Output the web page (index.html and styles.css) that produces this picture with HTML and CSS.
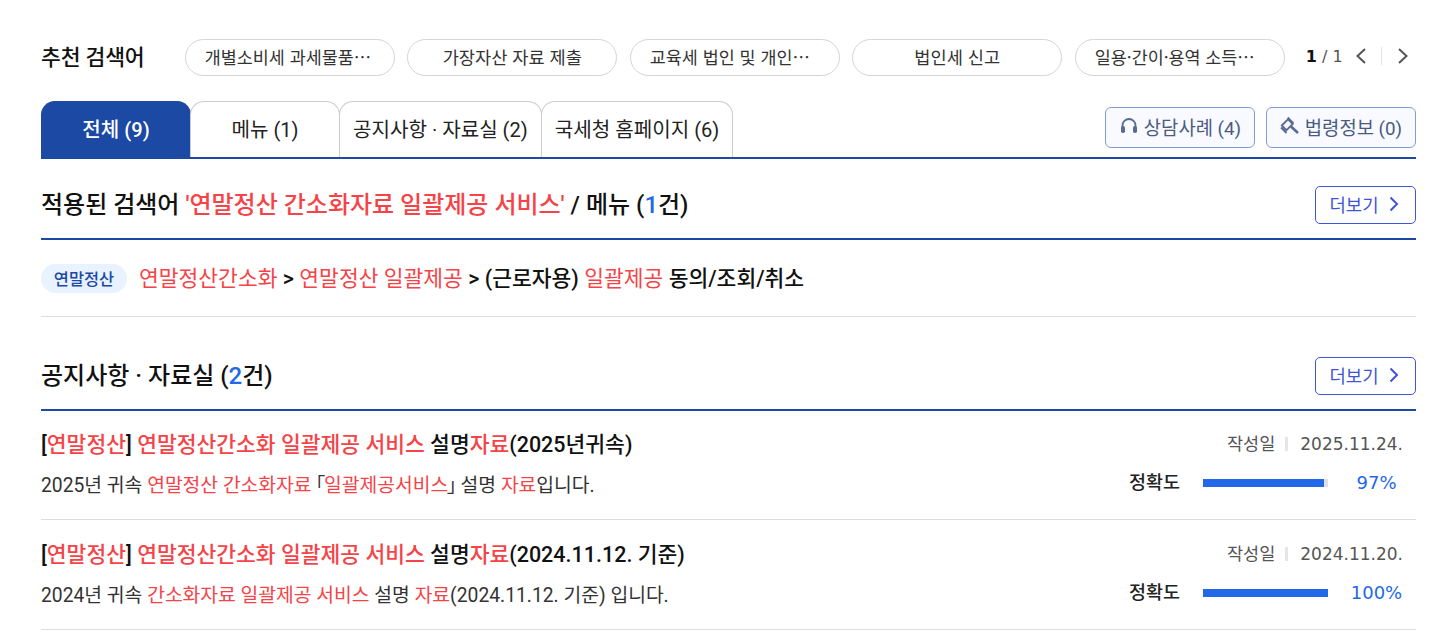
FILE: index.html
```html
<!DOCTYPE html>
<html lang="ko">
<head>
    <meta charset="UTF-8">
    <meta name="viewport" content="width=device-width, initial-scale=1.0">
    <title>검색 결과</title>
    <link rel="stylesheet" href="styles.css">
</head>
<body>
    <div class="wrap">
        <div class="rec-row">
            <strong class="rec-title">추천 검색어</strong>
            <div class="rec-list">
                <a class="pill pill-cut">개별소비세 과세물품…</a>
                <a class="pill">가장자산 자료 제출</a>
                <a class="pill pill-cut">교육세 법인 및 개인…</a>
                <a class="pill">법인세 신고</a>
                <a class="pill pill-cut">일용·간이·용역 소득…</a>
            </div>
            <div class="pager">
                <span class="pager-num"><b>1</b> / 1</span>
                <svg class="pager-arrow" viewBox="0 0 12 18"><path d="M11 2 3.500 9l7.500 7"/></svg>
                <i class="pager-sep"></i>
                <svg class="pager-arrow" viewBox="0 0 12 18"><path d="M1 2l7.500 7L1 16"/></svg>
            </div>
        </div>

        <div class="tab-row">
            <div class="tabs">
                <a class="tab tab-on tab-w1">전체 (9)</a>
                <a class="tab tab-w1">메뉴 (1)</a>
                <a class="tab">공지사항 · 자료실 (2)</a>
                <a class="tab">국세청 홈페이지 (6)</a>
            </div>
            <div class="side-btns">
                <a class="side-btn">
                    <svg class="side-icon" viewBox="0 0 20 20"><path class="ic-line" d="M3.500 12V9.500a6.500 6.500 0 0 1 13 0V12"/><rect class="ic-fill" x="2" y="10" width="4" height="7" rx="1.800"/><rect class="ic-fill" x="14" y="10" width="4" height="7" rx="1.800"/></svg>
                    상담사례 (4)
                </a>
                <a class="side-btn">
                    <svg class="side-icon" viewBox="0 0 20 20"><path class="ic-line" d="M1.800 9.500 8 3.300l4.700 4.700-6.200 6.200zM7.700 1.500l5.800 5.800M1 11.500l5.500 5.500"/><path class="ic-line ic-thick" d="M11 10.500l7 6.500"/></svg>
                    법령정보 (0)
                </a>
            </div>
        </div>

        <section class="sec sec-menu">
            <div class="sec-head">
                <h2>적용된 검색어 <em>'연말정산 간소화자료 일괄제공 서비스'</em> / 메뉴 (<u>1</u>건)</h2>
                <a class="more">더보기<svg viewBox="0 0 10 16"><path d="M1.500 1.500 8 8l-6.500 6.500"/></svg></a>
            </div>
            <div class="menu-row">
                <span class="badge">연말정산</span>
                <p class="crumb"><em>연말정산간소화</em> &gt; <em>연말정산 일괄제공</em> &gt; (근로자용) <em>일괄제공</em> 동의/조회/취소</p>
            </div>
        </section>

        <section class="sec">
            <div class="sec-head">
                <h2>공지사항 · 자료실 (<u>2</u>건)</h2>
                <a class="more">더보기<svg viewBox="0 0 10 16"><path d="M1.500 1.500 8 8l-6.500 6.500"/></svg></a>
            </div>
            <article class="item">
                <div class="item-main">
                    <h3>[<em>연말정산</em>] <em>연말정산간소화 일괄제공 서비스</em> 설명<em>자료</em>(2025년귀속)</h3>
                    <p>2025년 귀속 <em>연말정산 간소화자료</em> <span class="narrow">「</span><em>일괄제공서비스</em><span class="narrow">」</span> 설명 <em>자료</em>입니다.</p>
                </div>
                <div class="item-side">
                    <div class="date"><span>작성일</span><i></i><span class="date-num">2025.11.24.</span></div>
                    <div class="score">
                        <b>정확도</b>
                        <div class="bar"><div class="bar-fill" style="width: 97%"></div></div>
                        <span class="pct">97%</span>
                    </div>
                </div>
            </article>
            <article class="item">
                <div class="item-main">
                    <h3>[<em>연말정산</em>] <em>연말정산간소화 일괄제공 서비스</em> 설명<em>자료</em>(2024.11.12. 기준)</h3>
                    <p>2024년 귀속 <em>간소화자료 일괄제공 서비스</em> 설명 <em>자료</em>(2024.11.12. 기준) 입니다.</p>
                </div>
                <div class="item-side">
                    <div class="date"><span>작성일</span><i></i><span class="date-num">2024.11.20.</span></div>
                    <div class="score">
                        <b>정확도</b>
                        <div class="bar"><div class="bar-fill" style="width: 100%"></div></div>
                        <span class="pct">100%</span>
                    </div>
                </div>
            </article>
        </section>
    </div>
</body>
</html>
```

FILE: styles.css
```css
* {
    box-sizing: border-box;
}
body {
    margin: 0;
    background: #fff;
    color: #111;
    font-family: Roboto, "Noto Sans CJK KR", sans-serif;
}
em {
    font-style: normal;
    color: #f54348;
}
u {
    text-decoration: none;
    color: #2368e8;
}
.wrap {
    padding: 39px 27px 0 41px;
}
.rec-row {
    display: flex;
    align-items: center;
    height: 37px;
}
.rec-title {
    width: 143.8px;
    padding-bottom: 5px;
    font-size: 21.6px;
    font-weight: 500;
    letter-spacing: -0.2px;
}
.rec-list {
    display: flex;
    gap: 12.5px;
}
.pill {
    display: flex;
    align-items: center;
    justify-content: center;
    width: 210px;
    height: 37px;
    padding: 0 0 3px;
    border: 1px solid #d5d5d5;
    border-radius: 19px;
    font-family: "Noto Sans CJK KR", sans-serif;
    font-size: 17.6px;
    color: #333;
    white-space: nowrap;
}
.pill-cut {
    justify-content: flex-start;
    padding-left: 19px;
    font-size: 17.4px;
}
.pager {
    display: flex;
    align-items: center;
    margin-left: 21px;
    padding-bottom: 3px;
}
.pager-num {
    width: 48px;
    font-family: "DejaVu Sans", sans-serif;
    font-size: 16px;
    color: #555;
}
.pager-num b {
    color: #111;
}
.pager-arrow {
    width: 12px;
    height: 18px;
    fill: none;
    stroke: #555;
    stroke-width: 2;
}
.pager-sep {
    width: 1px;
    height: 18px;
    margin: 0 16px 0 15px;
    background: #e5e5e5;
}
.tab-row {
    display: flex;
    justify-content: space-between;
    align-items: flex-start;
    height: 58px;
    margin-top: 25px;
    border-bottom: 2px solid #1c49a3;
}
.tabs {
    display: flex;
    height: 56px;
}
.tab {
    display: flex;
    align-items: center;
    justify-content: center;
    padding: 0 13px 2px;
    margin-right: -1px;
    border: 1px solid #ccc;
    border-bottom: 0;
    border-radius: 14px 14px 0 0;
    background: #fff;
    font-size: 20.1px;
    color: #222;
    white-space: nowrap;
}
.tab-w1 {
    width: 150px;
}
.tab-on {
    border-color: #1c49a3;
    background: #1c49a3;
    color: #fff;
    font-weight: 500;
}
.side-btns {
    display: flex;
    gap: 11px;
    margin-top: 6px;
}
.side-btn {
    display: flex;
    align-items: center;
    justify-content: center;
    gap: 5px;
    width: 150px;
    height: 41px;
    padding-bottom: 3px;
    border: 1px solid #7f9fd0;
    border-radius: 6px;
    background: #f8faff;
    font-size: 18.8px;
    color: #4a5a80;
    white-space: nowrap;
}
.side-icon {
    flex: none;
    width: 20px;
    height: 20px;
}
.ic-line {
    fill: none;
    stroke: #5a6a90;
    stroke-width: 1.800;
}
.ic-thick {
    stroke-width: 2.600;
}
.ic-fill {
    fill: #5a6a90;
}
.sec-head {
    display: flex;
    justify-content: space-between;
    align-items: flex-start;
    height: 81px;
    padding-top: 27px;
    border-bottom: 2px solid #1c49a3;
}
.sec-head h2 {
    margin: 0;
    font-size: 24px;
    font-weight: 500;
    line-height: 38px;
}
.more {
    display: flex;
    align-items: center;
    justify-content: center;
    gap: 10px;
    width: 101px;
    height: 38px;
    padding: 0 3px 2px 0;
    border: 1px solid #3f55d8;
    border-radius: 5px;
    font-size: 17.8px;
    color: #3f55d8;
}
.more svg {
    width: 10px;
    height: 16px;
    fill: none;
    stroke: #3f55d8;
    stroke-width: 2;
}
.menu-row {
    display: flex;
    align-items: center;
    gap: 12px;
    height: 77px;
    border-bottom: 1px solid #ddd;
}
.badge {
    display: flex;
    align-items: center;
    justify-content: center;
    width: 86px;
    height: 29px;
    border-radius: 15px;
    background: #e8f3ff;
    font-size: 16.4px;
    font-weight: 500;
    color: #1c49a3;
}
.crumb {
    margin: 0 0 4px;
    font-size: 21.5px;
    font-weight: 500;
}
.crumb em {
    font-weight: 400;
}
.sec-menu {
    margin-bottom: 13px;
}
.sec-menu + .sec .sec-head {
    margin-bottom: -1px;
}
.item {
    display: flex;
    justify-content: space-between;
    height: 110px;
    border-bottom: 1px solid #ddd;
}
.item-main {
    padding-top: 20px;
}
.item h3 {
    margin: 0;
    font-size: 21.5px;
    font-weight: 500;
    line-height: 30px;
}
.item p {
    margin: 12px 0 0;
    font-size: 19.3px;
    line-height: 28px;
    color: #333;
}
.narrow {
    margin: 0 -1px;
    font-feature-settings: "palt";
}
.item-side {
    display: flex;
    flex-direction: column;
    align-items: flex-end;
    padding-top: 22px;
}
.date {
    display: flex;
    align-items: center;
    margin-right: 13px;
    font-size: 17.5px;
    line-height: 24px;
    color: #555;
}
.date i {
    width: 3px;
    height: 14px;
    margin: 0 12px 0 10px;
    background: #e6e6e6;
}
.date-num {
    font-family: "DejaVu Sans", sans-serif;
    font-size: 17px;
}
.score {
    display: flex;
    align-items: center;
    width: 287px;
    margin-top: 15px;
    line-height: 24px;
}
.score b {
    width: 74px;
    font-size: 18.5px;
    font-weight: 500;
    color: #222;
}
.bar {
    width: 125px;
    height: 8px;
    background: #dde1e6;
}
.bar-fill {
    height: 8px;
    background: #2368e8;
}
.pct {
    width: 88px;
    padding-left: 9px;
    text-align: center;
    font-family: "DejaVu Sans", sans-serif;
    font-size: 18px;
    color: #2368e8;
}
```
